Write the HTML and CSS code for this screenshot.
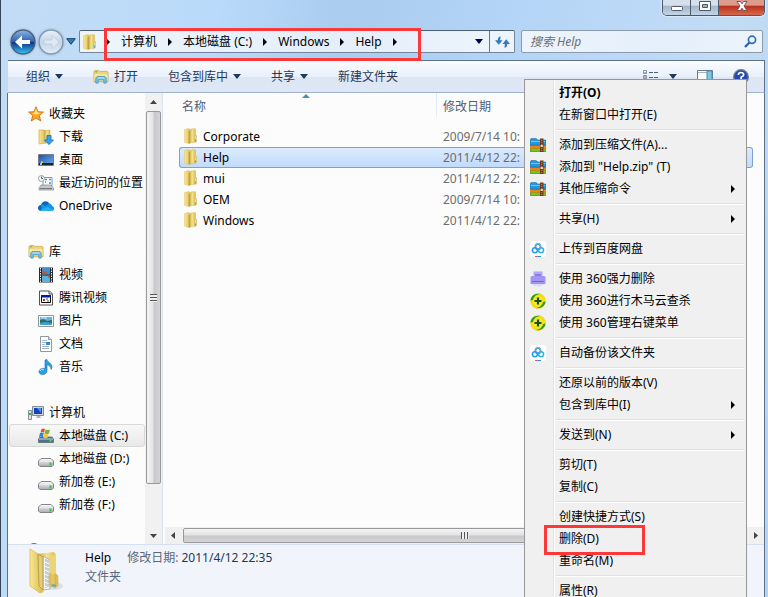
FILE: index.html
```html
<!DOCTYPE html>
<html lang="zh-CN">
<head>
<meta charset="utf-8">
<title>Help</title>
<link rel="stylesheet" href="styles.css">
</head>
<body>
<svg class="defs" aria-hidden="true">
  <defs>
    <linearGradient id="gold" x1="0" x2="1"><stop offset="0" stop-color="#f9e795"/><stop offset="1" stop-color="#d9b94a"/></linearGradient>
    <linearGradient id="gold2" x1="0" x2="1"><stop offset="0" stop-color="#c2a03e"/><stop offset=".5" stop-color="#f6e38c"/><stop offset="1" stop-color="#dabb4e"/></linearGradient>
    <linearGradient id="orb" x1="0" y1="0" x2="0" y2="1"><stop offset="0" stop-color="#8fb4e0"/><stop offset=".48" stop-color="#2c62b4"/><stop offset=".5" stop-color="#0c2f86"/><stop offset="1" stop-color="#35c8f4"/></linearGradient>
    <linearGradient id="pale" x1="0" y1="0" x2="0" y2="1"><stop offset="0" stop-color="#eaf2fa"/><stop offset=".5" stop-color="#c3d5e8"/><stop offset="1" stop-color="#e1eefa"/></linearGradient>
    <linearGradient id="disk" x1="0" y1="0" x2="0" y2="1"><stop offset="0" stop-color="#fdfdfd"/><stop offset="1" stop-color="#a9abb2"/></linearGradient>
    <linearGradient id="sky" x1="0" y1="0" x2="1" y2="1"><stop offset="0" stop-color="#1c4fa8"/><stop offset="1" stop-color="#6fb2ee"/></linearGradient>
    <radialGradient id="ball"><stop offset="0" stop-color="#fdf650"/><stop offset="1" stop-color="#f0d800"/></radialGradient>
  </defs>
  <symbol id="folder" viewBox="0 0 16 16">
    <path d="M1.500 1.500L6 .5 8 2v12l-2 1.500-4.500-1.200z" fill="url(#gold)" stroke="#dcc468" stroke-width=".5"/>
    <path d="M6.500 3L8.500.8h4V14L8 14.800 6 15.500z" fill="url(#gold2)" stroke="#d4b755" stroke-width=".5"/>
    <path d="M6.200 3v12.200" stroke="#b3903a" stroke-width=".8"/>
    <path d="M11.800 8l1.700-.5v6.300l-2 .5z" fill="#f4e6a0" stroke="#c6a94b" stroke-width=".5"/>
    <path d="M12.500 11.500v2" stroke="#3ba4c8"/>
  </symbol>
  <symbol id="bigfolder" viewBox="0 0 34 46">
    <ellipse cx="24" cy="38" rx="10" ry="4" fill="#ccd2dc" opacity=".6"/>
    <path d="M8 6l17-2 2 3v31l-12 4z" fill="url(#gold2)"/>
    <path d="M14 8l7 4v29l-7 1z" fill="#f4f6f8" stroke="#a3a8aa" stroke-width=".8"/>
    <path d="M17 11v29M19 12v28" stroke="#9ba4ab" stroke-dasharray="3 1"/>
    <path d="M1 1l8 5v17l5 4v17l-3 1-10-7z" fill="url(#gold)" stroke="#e0c566"/>
    <path d="M9 6l5 3v33l-4-4z" fill="#e3cd74" stroke="#bda04b"/>
    <path d="M21 9l6-3v19l-6 3z" fill="#ecd577"/>
    <path d="M20 27l2-2v12l5 1V26l2 2v10l-3 2-6-3z" fill="#e5c65d" stroke="#c3a345" stroke-width=".5"/>
    <path d="M23 37l4 1" stroke="#54a8da" stroke-width="2"/>
  </symbol>
  <symbol id="library" viewBox="0 0 17 16">
    <path d="M1 2l1-1h4l1 1h8l1 1v10H1z" fill="#ead580" stroke="#c6aa4c" stroke-width=".8"/>
    <path d="M1.500 5h14v7h-14z" fill="#f7e798"/>
    <path d="M2.500 2.500h2" stroke="#48a84e"/>
    <path d="M3 14.500V9l1.500-1.500h8L14 9v5.500h-2.500V11h-6v3.500z" fill="#7cc4e8" stroke="#3c8fbc" stroke-width=".8"/>
    <path d="M5 9h7" stroke="#c8ebfa"/>
  </symbol>
  <symbol id="star" viewBox="0 0 16 16"><path d="M8 .8l2 5 5.400.3-4.200 3.500 1.600 5.400L8 12l-4.800 3 1.600-5.400L.6 6.100 6 5.800z" fill="#fba92c" stroke="#d56d12" stroke-width=".9"/><path d="M8 2.500L9.400 6.600l3.800.3L8 8.500 4 7.200l2.600-.6z" fill="#ffe58a"/></symbol>
  <symbol id="download" viewBox="0 0 16 16"><path d="M1 1h5l2 1v12l-7 1z" fill="url(#gold)" stroke="#cdb050" stroke-width=".7"/><path d="M6 2l6-1v12l-5 1z" fill="url(#gold2)" stroke="#cdb050" stroke-width=".6"/><path d="M9 6.500h4V11h2.500L11 15.600 6.500 11H9z" fill="#35a2ea" stroke="#1568b6" stroke-width=".8"/></symbol>
  <symbol id="desktop" viewBox="0 0 16 16"><path d="M.5 2.500h15v11H.5z" fill="url(#sky)" stroke="#757c88"/><path d="M1 11h14v2H1z" fill="#17222f"/><path d="M2 11h2v2H2z" fill="#76d4ff"/><path d="M3 9l2 1v1H3z" fill="#f5cf3e"/></symbol>
  <symbol id="recent" viewBox="0 0 16 16"><path d="M5 2.500h9v8H5z" fill="#fff" stroke="#8b96a2"/><path d="M7 4.500h2m2 0h2M7 7h1m3 1h2" stroke="#3f93cd" stroke-width="1.500"/><path d="M3 10h10l2.500 3v2H1v-2z" fill="#c5c8cb" stroke="#858b90" stroke-width=".7"/><path d="M2 13.500h12" stroke="#75797d"/><circle cx="3.500" cy="3.500" r="3" fill="#f3f8f7" stroke="#83908f" stroke-width=".8"/><path d="M3.500 1.500v2H5" stroke="#398456" fill="none"/></symbol>
  <symbol id="cloud" viewBox="0 0 16 16"><path d="M3.500 13C1.400 13 0 11.800 0 10s1.300-3 2.900-3.100C3.600 4.600 5.400 3.200 7.400 3.200c1.700 0 3 .8 3.800 2.200L14 8l-3 5z" fill="#0866bd"/><path d="M3 7c2-1 3 0 4.500 1L11 5.500c1.800.1 2.800 1.300 3 2.500 1.200.2 2 1.200 2 2.400 0 1.600-1.200 2.600-2.700 2.600H3.500z" fill="#1492df"/><path d="M2 12.500L9 8.700l6.500 3.300c-.5.700-1.200 1-2.200 1H3.500z" fill="#2caef0"/></symbol>
  <symbol id="video" viewBox="0 0 16 16"><path d="M1 .5h14v15H1z" fill="#292a2d"/><path d="M4 1h8v6.500H4z" fill="#3d91cf"/><path d="M4 8.500h8V15H4z" fill="#59b1dd"/><path d="M4 3l3 2 2.500-.5L8 7.500H4zM10 8.500h2v3l-2-1z" fill="#a85f4c"/><path d="M2.500 1v14m11-14v14" stroke="#f2f2f2" stroke-dasharray="1.500 1"/></symbol>
  <symbol id="tencent" viewBox="0 0 16 16"><path d="M1.500 1h10l3 3v11h-13z" fill="#fff" stroke="#555"/><path d="M11 1v3h3" fill="#ddd" stroke="#555"/><path d="M3.500 5.500h9v7h-9z" fill="#fff" stroke="#000"/><path d="M3 5h10v2.500H3z" fill="#071a8e"/><path d="M5 10h2" stroke="#d81924" stroke-width="2"/><path d="M8 9h2" stroke="#1951e1"/><path d="M9 11h2" stroke="#168d30"/></symbol>
  <symbol id="picture" viewBox="0 0 16 16"><path d="M.5 2.500h15v11H.5z" fill="#fff" stroke="#8f979e"/><path d="M2 4h12v8H2z" fill="#5bb3ec"/><path d="M2 7q4-2 7 1l5-1v5H2z" fill="#286f60"/><path d="M2 10l5-1 7 1v2H2z" fill="#479cd0"/><path d="M3 5h6" stroke="#d4f0ff"/></symbol>
  <symbol id="document" viewBox="0 0 16 16"><path d="M2.500.5h8l3 3v12h-11z" fill="#fff" stroke="#8f9ba4"/><path d="M10.500.5v3h3" fill="#dce2e5" stroke="#8f9ba4"/><path d="M4 4.500h5M4 6.500h4M4 8.500h3M4 10.500h7M4 12.500h7" stroke="#92a7b9" stroke-width=".8"/><path d="M8 6h4v3H8z" fill="#348bcb"/></symbol>
  <symbol id="music" viewBox="0 0 16 16"><path d="M7 1l2-.5c0 3 5 3 5 8l-1 2c.2-3-2-4-4-5v6c0 2.500-2 4-4.500 4-2 0-3.500-1-3.500-2.800 0-2.500 3-4 6-3z" fill="#2b9fe7" stroke="#136cb2" stroke-width=".6"/><path d="M2 12c1-2 3-2 4-1" stroke="#aee6ff" fill="none"/></symbol>
  <symbol id="computer" viewBox="0 0 16 16"><path d="M4.500 1.500h11v9h-11z" fill="#cfd5db" stroke="#858d96"/><path d="M6 3h8v6H6z" fill="#1643ba"/><path d="M9 3h4v5z" fill="#528feb"/><path d="M9 11h3l1 2H8z" fill="#aeb5ba"/><path d="M.5 5.500h3v9h-3z" fill="#dde1e5" stroke="#86909a"/><path d="M1 9h2" stroke="#40b24c" stroke-width="2"/></symbol>
  <symbol id="drive" viewBox="0 0 16 16"><path d="M3 7.500h10l2.500 2.500v4L14 15.500H2L.5 14v-4z" fill="url(#disk)" stroke="#777a7f" stroke-width=".9"/><path d="M1 10.500h14" stroke="#e8e9ec"/><path d="M12.500 11.500v3" stroke="#37c246" stroke-width="2"/></symbol>
  <symbol id="sysdrive" viewBox="0 0 16 16"><path d="M2 9h12l1.500 2v3.500H.5V11z" fill="#497585" stroke="#596b73" stroke-width=".8"/><path d="M1 11h14" stroke="#c6dce1"/><path d="M12.500 11.500v2" stroke="#4adc58" stroke-width="2"/><path d="M3.500 1q2-1 3.500 0L6 4.500q-2-1-3.500 0z" fill="#e95024"/><path d="M7.500 1.500q2 1 4.500 0l-1 4q-2 1-4.500 0z" fill="#70b63a"/><path d="M2 5q2-1 3.800 0l-1 4q-2-1-3.800 0z" fill="#3685d3"/><path d="M6.300 5.700q2 1 4.200 0l-1 4q-2 .7-4.200-.3z" fill="#ffc629"/></symbol>
  <symbol id="archive" viewBox="0 0 16 16"><path d="M0 3l1-1.500h5L8 3h8v5H0z" fill="#2598dd" stroke="#12639b" stroke-width=".5"/><path d="M1 4.500h14" stroke="#6fc6f5"/><path d="M0 8h16v4H0z" fill="#ed7e18"/><path d="M0 8.500h16" stroke="#c95d10"/><path d="M0 11.500h16V15H0z" fill="#5fae1c"/><path d="M1 13h14" stroke="#93d42c"/><path d="M10 1.500h3.500V15H10z" fill="#743c1a"/><path d="M11.700 3v11" stroke="#b98d52" stroke-dasharray="1 1"/><path d="M10.500 8h2.500v2h-2.500z" fill="#ddd0ad"/></symbol>
  <symbol id="pan" viewBox="0 0 16 16"><rect width="16" height="16" rx="3" fill="#fff"/><g fill="none" stroke-width="1.500"><circle cx="8" cy="5.700" r="2.600" stroke="#ee4e6a"/><circle cx="4.900" cy="9.200" r="2.500" stroke="#2b9bf3"/><circle cx="11.100" cy="9.200" r="2.500" stroke="#27b8ef"/><path d="M5.400 5.700A2.600 2.600 0 0 1 10.600 5.700" stroke="#36b9ee"/></g><path d="M5 15.500h3" stroke="#f65165"/><path d="M8 15.500h3" stroke="#278cee"/></symbol>
  <symbol id="shredder" viewBox="0 0 16 16"><path d="M3.500.5h9v6h-9z" fill="#b2a7f8"/><path d="M5 3h6v3H5z" fill="#8a7de6"/><path d="M2 5h12q1.500 0 1.500 1.500V13H.500V6.500Q.5 5 2 5z" fill="#a095f2"/><path d="M2 10.500h12" stroke="#7566d9"/><path d="M3 13v1m2-1v2m2-2v2m2-2v3m2-3v2m2-2v1" stroke="#cbc3ff"/></symbol>
  <symbol id="guard" viewBox="0 0 16 16"><circle cx="8" cy="8" r="7.700" fill="url(#ball)"/><path d="M.5 7.500C1 3 5 0 10 1 6 1.500 3.500 4 3 7zM15.500 8.500C15 13 11 16 6 15c4-.5 6.500-3 7-6z" fill="#269b2d"/><path d="M8 4.500v7M4.500 8h7" stroke="#17501f" stroke-width="2.200"/></symbol>
  <symbol id="caret" viewBox="0 0 8 5"><path d="M0 0h8L4 5z" fill="currentColor"/></symbol>
  <symbol id="wedge" viewBox="0 0 4 8"><path d="M0 0l4 4-4 4z" fill="currentColor"/></symbol>
</svg>

<main class="window">
  <header class="titlebar">
    <div class="controls">
      <button class="control" aria-label="最小化"><svg viewBox="0 0 14 14"><rect x="1.500" y="6.500" width="11" height="4" rx="1" fill="#fff" stroke="#4d5a6c"/></svg></button>
      <button class="control" aria-label="最大化"><svg viewBox="0 0 14 14"><path d="M1.500 1.500h11v9h-11z" fill="#fff" stroke="#4d5a6c"/><path d="M4.500 4.500h5v3h-5z" fill="#9fb2c9" stroke="#4d5a6c"/></svg></button>
      <button class="control close" aria-label="关闭"><svg viewBox="0 0 14 14"><path d="M2 1.500h3.500L7 3.800l1.500-2.300H12L9 6l3 4.500H8.500L7 8.200l-1.500 2.300H2L5 6z" fill="#fff" stroke="#6c4a50" stroke-width=".9"/></svg></button>
    </div>
  </header>

  <div class="navbar">
    <div class="orbs">
      <button class="orb" aria-label="后退"><svg viewBox="0 0 26 26"><circle cx="13" cy="13" r="12" fill="url(#orb)" stroke="#4d607d" stroke-width="1.500"/><path d="M5 13l7-6.500v4.500h8v4h-8v4.500z" fill="#fff"/></svg></button>
      <button class="orb" aria-label="前进"><svg viewBox="0 0 26 26"><circle cx="13" cy="13" r="12" fill="url(#pale)" stroke="#8597ac" stroke-width="1.500"/><path d="M21 13l-7-6.500v4.500H6v4h8v4.500z" fill="#e0e9f2" stroke="#bdcad9" stroke-width=".7"/></svg></button>
      <button class="recentpages" aria-label="最近页面"><svg viewBox="0 0 10 7"><path d="M.7.700h8.600L5 6.300z" fill="#3a7cb8" stroke="#173f73"/></svg></button>
    </div>
    <div class="address">
      <svg class="icon"><use href="#folder"/></svg>
      <nav class="crumbs">
        <svg class="wedge"><use href="#wedge"/></svg>
        <a href="#">计算机</a><svg class="wedge"><use href="#wedge"/></svg>
        <a href="#">本地磁盘 (C:)</a><svg class="wedge"><use href="#wedge"/></svg>
        <a href="#">Windows</a><svg class="wedge"><use href="#wedge"/></svg>
        <a href="#">Help</a><svg class="wedge"><use href="#wedge"/></svg>
        <span class="mark mark-path"></span>
      </nav>
      <button class="drop" aria-label="历史地址"><svg class="caret"><use href="#caret"/></svg></button>
      <button class="refresh" aria-label="刷新"><svg viewBox="0 0 16 14"><path d="M6 1Q3 1 3 5H0l4 5 4-5H5.500q0-2 .5-4z" fill="#2e7cc7"/><path d="M10 13q3 0 3-4h3l-4-5-4 5h2.500q0 2-.5 4z" fill="#3e77b5"/></svg></button>
    </div>
    <label class="search">
      <input type="text" placeholder="搜索 Help" aria-label="搜索 Help">
      <svg viewBox="0 0 13 13"><circle cx="8" cy="4.800" r="3.600" fill="#e9f7ff" stroke="#2c6fc2" stroke-width="1.700"/><path d="M5.200 7.700L1 12" stroke="#285ca9" stroke-width="2.200"/></svg>
    </label>
  </div>

  <div class="toolbar">
    <button class="tool organize">组织<svg class="caret"><use href="#caret"/></svg></button>
    <button class="tool open"><svg class="icon"><use href="#library"/></svg>打开</button>
    <button class="tool">包含到库中<svg class="caret"><use href="#caret"/></svg></button>
    <button class="tool">共享<svg class="caret"><use href="#caret"/></svg></button>
    <button class="tool">新建文件夹</button>
    <div class="views">
      <button aria-label="更改视图"><svg class="icon" viewBox="0 0 16 16"><g fill="#fff" stroke="#8195ac"><path d="M.5 1.500h3v3h-3zM.5 6.500h3v3h-3zM.5 11.500h3v3h-3z"/></g><path d="M2 3v1" stroke="#3577c5"/><path d="M2 7v2" stroke="#db3333"/><path d="M6 3.500h4m1 0h4M6 8.500h4m1 0h4M6 13.500h4m1 0h4" stroke="#4e6075"/></svg></button>
      <button aria-label="更多选项"><svg class="caret"><use href="#caret"/></svg></button>
      <button class="pane" aria-label="预览窗格"><svg class="icon" viewBox="0 0 16 16"><path d="M.5 1.500h15v13H.5z" fill="#fff" stroke="#657a94"/><path d="M1 3.500h9" stroke="#a5b6c6"/><path d="M10 2h5v12h-5z" fill="#7ec8df" stroke="#548aa8"/></svg></button>
      <button aria-label="帮助"><svg class="icon" viewBox="0 0 16 16"><circle cx="8" cy="8" r="7.300" fill="#2349b4" stroke="#6d788f" stroke-width="1.300"/><path d="M5.300 6Q5.500 3.500 8 3.500t2.700 2.200Q10.700 7 8.200 8v2M8.200 11.500v1.500" fill="none" stroke="#fff" stroke-width="1.700"/></svg></button>
    </div>
  </div>

  <div class="content">
    <aside class="sidebar">
      <nav class="tree">
        <a class="node root" href="#"><svg class="icon"><use href="#star"/></svg>收藏夹</a>
        <a class="node" href="#"><svg class="icon"><use href="#download"/></svg>下载</a>
        <a class="node" href="#"><svg class="icon"><use href="#desktop"/></svg>桌面</a>
        <a class="node" href="#"><svg class="icon"><use href="#recent"/></svg>最近访问的位置</a>
        <a class="node" href="#"><svg class="icon"><use href="#cloud"/></svg>OneDrive</a>
        <a class="node root group" href="#"><svg class="icon"><use href="#library"/></svg>库</a>
        <a class="node" href="#"><svg class="icon"><use href="#video"/></svg>视频</a>
        <a class="node" href="#"><svg class="icon"><use href="#tencent"/></svg>腾讯视频</a>
        <a class="node" href="#"><svg class="icon"><use href="#picture"/></svg>图片</a>
        <a class="node" href="#"><svg class="icon"><use href="#document"/></svg>文档</a>
        <a class="node" href="#"><svg class="icon"><use href="#music"/></svg>音乐</a>
        <a class="node root group" href="#"><svg class="icon"><use href="#computer"/></svg>计算机</a>
        <a class="node current" href="#"><svg class="icon"><use href="#sysdrive"/></svg>本地磁盘 (C:)</a>
        <a class="node" href="#"><svg class="icon"><use href="#drive"/></svg>本地磁盘 (D:)</a>
        <a class="node" href="#"><svg class="icon"><use href="#drive"/></svg>新加卷 (E:)</a>
        <a class="node" href="#"><svg class="icon"><use href="#drive"/></svg>新加卷 (F:)</a>
        <span class="node root group"><svg class="icon" viewBox="0 0 16 16"><circle cx="6" cy="6" r="6" fill="#2688b4"/></svg></span>
      </nav>
      <div class="vscroll">
        <svg viewBox="0 0 7 4"><path d="M0 4h7L3.500 0z" fill="#444"/></svg>
        <div class="vthumb"><span class="grip"></span></div>
        <svg viewBox="0 0 7 4"><path d="M0 0h7L3.500 4z" fill="#444"/></svg>
      </div>
    </aside>

    <section class="files">
      <table>
        <thead><tr><th class="name">名称<svg class="sort" viewBox="0 0 8 4"><path d="M0 4h8L4 0z" fill="#4f8cac"/></svg></th><th>修改日期</th></tr></thead>
        <tbody>
          <tr><td><svg class="icon"><use href="#folder"/></svg>Corporate</td><td>2009/7/14 10:</td></tr>
          <tr class="selected"><td><svg class="icon"><use href="#folder"/></svg>Help</td><td>2011/4/12 22:</td></tr>
          <tr><td><svg class="icon"><use href="#folder"/></svg>mui</td><td>2011/4/12 22:</td></tr>
          <tr><td><svg class="icon"><use href="#folder"/></svg>OEM</td><td>2009/7/14 10:</td></tr>
          <tr><td><svg class="icon"><use href="#folder"/></svg>Windows</td><td>2011/4/12 22:</td></tr>
        </tbody>
      </table>
      <div class="hscroll">
        <svg viewBox="0 0 4 7"><path d="M4 0v7L0 3.500z" fill="#444"/></svg>
        <div class="hthumb"><span class="grip"></span></div>
        <svg viewBox="0 0 4 7"><path d="M0 0v7l4-3.500z" fill="#444"/></svg>
      </div>
    </section>
  </div>

  <footer class="details">
    <svg class="preview"><use href="#bigfolder"/></svg>
    <div>
      <p><strong>Help</strong>修改日期: <span>2011/4/12 22:35</span></p>
      <p>文件夹</p>
    </div>
  </footer>

  <div class="menu" role="menu">
    <button class="item default" role="menuitem">打开(O)</button>
    <button class="item" role="menuitem">在新窗口中打开(E)</button>
    <hr>
    <button class="item" role="menuitem"><svg class="icon"><use href="#archive"/></svg>添加到压缩文件(A)...</button>
    <button class="item" role="menuitem"><svg class="icon"><use href="#archive"/></svg>添加到 "Help.zip" (T)</button>
    <button class="item" role="menuitem"><svg class="icon"><use href="#archive"/></svg>其他压缩命令<svg class="wedge"><use href="#wedge"/></svg></button>
    <hr>
    <button class="item" role="menuitem">共享(H)<svg class="wedge"><use href="#wedge"/></svg></button>
    <hr>
    <button class="item" role="menuitem"><svg class="icon"><use href="#pan"/></svg>上传到百度网盘</button>
    <hr>
    <button class="item" role="menuitem"><svg class="icon"><use href="#shredder"/></svg>使用 360强力删除</button>
    <button class="item" role="menuitem"><svg class="icon"><use href="#guard"/></svg>使用 360进行木马云查杀</button>
    <button class="item" role="menuitem"><svg class="icon"><use href="#guard"/></svg>使用 360管理右键菜单</button>
    <hr>
    <button class="item" role="menuitem"><svg class="icon"><use href="#pan"/></svg>自动备份该文件夹</button>
    <hr>
    <button class="item" role="menuitem">还原以前的版本(V)</button>
    <button class="item" role="menuitem">包含到库中(I)<svg class="wedge"><use href="#wedge"/></svg></button>
    <hr>
    <button class="item" role="menuitem">发送到(N)<svg class="wedge"><use href="#wedge"/></svg></button>
    <hr>
    <button class="item" role="menuitem">剪切(T)</button>
    <button class="item" role="menuitem">复制(C)</button>
    <hr>
    <button class="item" role="menuitem">创建快捷方式(S)</button>
    <button class="item" role="menuitem">删除(D)<span class="mark mark-delete"></span></button>
    <button class="item" role="menuitem">重命名(M)</button>
    <hr>
    <button class="item" role="menuitem">属性(R)</button>
  </div>
</main>
</body>
</html>
```
FILE: styles.css
```css
* { box-sizing: border-box; }

body {
  margin: 0;
  font: 12px/20px "Noto Sans", "Noto Sans CJK SC", sans-serif;
  color: #000;
}

button {
  font: inherit;
  color: inherit;
  border: 0;
  padding: 0;
  background: none;
}

a { color: inherit; text-decoration: none; }
svg { display: block; flex: none; }
p { margin: 0; }
.defs { position: absolute; width: 0; height: 0; }
.icon { width: 16px; height: 16px; }
.caret { width: 8px; height: 5px; }
.wedge { width: 4px; height: 8px; }

.window {
  position: relative;
  display: flex;
  flex-direction: column;
  height: 100vh;
  overflow: hidden;
  padding: 0 3px 0 7px;
  border-left: 1px solid #36445a;
  background: linear-gradient(100deg, #c3dcf5 0, #b9dafa 25%, #a9ccef 40%, #b4d5f7 60%, #c3dcf5 85%, #b5d3f3 100%);
}

/* Title bar */
.titlebar {
  flex: none;
  height: 28px;
}

.controls {
  display: flex;
  width: 103px;
  height: 16px;
  margin-left: auto;
  border: 1px solid #4b5868;
  border-top: 0;
  border-radius: 0 0 5px 5px;
  overflow: hidden;
  box-shadow: 0 0 1px 1px #dcecfb;
}

.control {
  display: flex;
  justify-content: center;
  width: 28px;
  border-right: 1px solid #4b5868;
  background: linear-gradient(#d5e0ec 0 35%, #a3b5ca 40%, #c3d4e6);
}

.control svg { width: 14px; height: 14px; }

.close {
  flex: 1;
  border: 0;
  background: linear-gradient(#dd9b8e 0 35%, #b9301d 40%, #d8674b);
}

/* Navigation row */
.navbar {
  flex: none;
  display: flex;
  align-items: center;
  height: 32px;
  padding: 0 2px 5px 2px;
}

.orbs {
  display: flex;
  align-items: center;
  gap: 2px;
  width: 69px;
}

.orb {
  width: 26px;
  height: 26px;
  border-radius: 13px;
  box-shadow: 0 0 2px #8ca3bf;
}

.recentpages svg { width: 10px; height: 7px; }

.address,
.search {
  display: flex;
  align-items: center;
  height: 23px;
  border: 1px solid #75869a;
  border-top-color: #4e5f75;
  border-radius: 2px;
  background: linear-gradient(90deg, #edf4fc, #e4effb 60%, #edf4fc);
}

.address {
  flex: 1;
  margin-right: 6px;
  padding-left: 2px;
}

.crumbs {
  position: relative;
  flex: 1;
  display: flex;
  align-items: center;
  gap: 11px;
  padding-left: 8px;
}

.mark {
  position: absolute;
  border: 3px solid #fc3838;
  pointer-events: none;
}

.mark-path { inset: -4px auto -9px 6px; width: 317px; z-index: 1; }

.drop { width: 20px; padding-left: 6px; color: #00005a; }

.refresh {
  align-self: stretch;
  width: 25px;
  padding-left: 5px;
  border-left: 1px solid #66788e;
}

.refresh svg { width: 15px; height: 14px; }

.search {
  width: 242px;
  padding: 0 5px 0 8px;
  border-color: #8b9aac;
}

.search input {
  flex: 1;
  min-width: 0;
  padding: 0;
  border: 0;
  background: none;
  font: italic 12px/20px "Noto Sans", "Noto Sans CJK SC", sans-serif;
}

.search input::placeholder { color: #6b7075; opacity: 1; }
.search svg { width: 13px; height: 13px; }

/* Command bar */
.toolbar {
  flex: none;
  display: flex;
  align-items: center;
  gap: 30px;
  height: 33px;
  padding: 0 15px 0 18px;
  border: 1px solid #5c7088;
  border-bottom-color: #9eb2cd;
  border-width: 1px 1px 1px 0;
  background: linear-gradient(#fafcff, #e9f0fa 50%, #dce6f4 52%, #dde7f5);
  color: #1e395b;
}

.tool {
  display: flex;
  align-items: center;
  gap: 5px;
  white-space: nowrap;
}

.views {
  display: flex;
  align-items: center;
  gap: 10px;
  margin-left: auto;
}

.pane { margin: 0 10px; }

/* Panes */
.content {
  flex: 1;
  display: flex;
  min-height: 0;
  border: solid #5c7088;
  border-width: 0 1px;
  margin-left: -1px;
  background: #fcfcfc;
}

.sidebar {
  display: flex;
  width: 155px;
  overflow: hidden;
  border-right: 1px solid #d9e4f3;
}

.tree { flex: 1; padding: 9px 0 0 1px; }

.node {
  display: flex;
  align-items: center;
  gap: 5px;
  height: 23px;
  padding-left: 28px;
  border: 1px solid transparent;
  white-space: nowrap;
}

.root { padding-left: 18px; }
.group { margin-top: 23px; }

.current {
  border-color: #d9d9d9;
  border-radius: 3px;
  background: linear-gradient(#f8f8f8, #e8e8e8);
}

.vscroll {
  display: flex;
  flex-direction: column;
  align-items: center;
  width: 17px;
  padding: 7px 1px 6px 0;
  background: #f1f1f1;
}

.vscroll > svg { width: 7px; height: 4px; }

.vthumb {
  display: flex;
  align-items: center;
  justify-content: center;
  width: 15px;
  flex: 1;
  margin: 7px 0 50px;
  border: 1px solid #989898;
  border-radius: 2px;
  background: linear-gradient(90deg, #f5f5f5, #e3e3e5 45%, #c8c8cc 55%, #d4d4d7);
}

.vthumb .grip {
  width: 7px;
  height: 8px;
  background: repeating-linear-gradient(#555 0 1px, #eee 1px 3px);
}

.files {
  flex: 1;
  display: flex;
  flex-direction: column;
  justify-content: space-between;
  min-width: 0;
  padding-left: 2px;
}

table {
  width: calc(100% - 25px);
  margin-left: 14px;
  border-collapse: separate;
  border-spacing: 0;
  table-layout: fixed;
}

th {
  position: relative;
  height: 33px;
  padding: 4px 0 9px 7px;
  font-weight: normal;
  text-align: left;
  color: #4c607a;
  background: linear-gradient(#dce8f5, #e8f0f8) left top / 1px 24px no-repeat;
}

.name { width: 257px; padding-left: 3px; background: none; }
.sort { position: absolute; top: 1px; left: 123px; width: 8px; height: 4px; }

td {
  height: 21px;
  padding: 0 0 0 7px;
  border: solid transparent;
  border-width: 1px 0;
  line-height: 19px;
  color: #6d6d6d;
}

td:first-child { padding-left: 3px; border-left-width: 1px; color: #000; }
td .icon { float: left; margin: 1px 4px 0 0; }
.selected td { border-color: #7da2ce; background: linear-gradient(#dcebfc, #c1dbfc); }
.selected td:first-child { border-radius: 3px 0 0 3px; }
.selected td:last-child { border-right-width: 1px; border-radius: 0 3px 3px 0; }

.hscroll {
  display: flex;
  align-items: center;
  gap: 8px;
  height: 17px;
  padding: 0 6px;
  background: #f0f0f0;
}

.hscroll > svg { width: 4px; height: 7px; }

.hthumb {
  flex: 1;
  display: flex;
  align-items: center;
  justify-content: center;
  height: 15px;
  border: 1px solid #999;
  border-radius: 2px;
  background: linear-gradient(#f5f5f5, #e3e3e5 45%, #c8c8cc 55%, #d4d4d7);
}

.hthumb .grip {
  width: 8px;
  height: 7px;
  background: repeating-linear-gradient(90deg, #555 0 1px, #eee 1px 3px);
}

/* Details pane */
.details {
  flex: none;
  display: flex;
  gap: 22px;
  height: 53px;
  padding: 4px 0 0 21px;
  margin-left: -1px;
  border: solid #5c7088;
  border-width: 0 1px;
  background: #f1f5fb;
  box-shadow: inset 0 1px #d5e1f2;
  line-height: 19px;
  color: #5a6779;
}

.preview { width: 34px; height: 46px; }
.details strong { margin-right: 16px; font-weight: normal; color: #000; }
.details span { color: #1e395b; }

/* Context menu */
.menu {
  position: absolute;
  top: 79px;
  right: 21px;
  width: 223px;
  padding: 2px 2px 4px;
  border: 1px solid #979797;
  background: linear-gradient(90deg, transparent 28px, #e2e3e3 28px 29px, #fff 29px 30px, transparent 30px), #f0f0f0;
}

.item {
  position: relative;
  display: flex;
  align-items: center;
  width: 100%;
  height: 22px;
  padding: 0 9px 0 32px;
  white-space: nowrap;
}

.item > .icon { margin: 0 13px 0 -29px; }
.item > .wedge { margin-left: auto; }
.default { font-weight: bold; }

hr {
  height: 2px;
  margin: 3px 0 3px 29px;
  border: 0;
  border-top: 1px solid #e0e0e0;
  background: #fff;
}

.mark-delete { top: -3px; left: 17px; width: 101px; height: 30px; z-index: 1; }
```
